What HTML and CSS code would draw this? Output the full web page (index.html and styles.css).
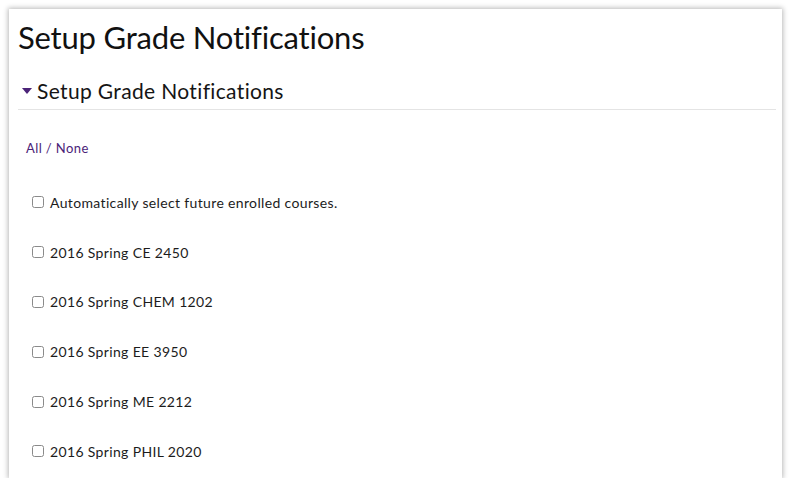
FILE: index.html
```html
<!DOCTYPE html>
<html>
<head>
<meta charset="utf-8">
<link rel="stylesheet" href="styles.css">
</head>
<body>
<div class="card">
  <h1 class="title">Setup Grade Notifications</h1>
  <div class="section-head">
    <span class="caret"></span>
    <h2 class="section-title">Setup Grade Notifications</h2>
  </div>
  <div class="section-body">
    <a class="allnone" href="#">All / None</a>
    <ul class="options">
      <li class="option"><span class="box"></span><span class="label">Automatically select future enrolled courses.</span></li>
      <li class="option"><span class="box"></span><span class="label">2016 Spring CE 2450</span></li>
      <li class="option"><span class="box"></span><span class="label">2016 Spring CHEM 1202</span></li>
      <li class="option"><span class="box"></span><span class="label">2016 Spring EE 3950</span></li>
      <li class="option"><span class="box"></span><span class="label">2016 Spring ME 2212</span></li>
      <li class="option"><span class="box"></span><span class="label">2016 Spring PHIL 2020</span></li>
    </ul>
  </div>
</div>
</body>
</html>
```

FILE: styles.css
```css
html, body {
  margin: 0;
  padding: 0;
  background: #ffffff;
}
body {
  font-family: "Lato", "Open Sans", sans-serif;
  color: #1a1a1a;
}
.card {
  box-sizing: border-box;
  margin: 9px 0 0 9px;
  width: 773px;
  height: 469px;
  background: #fff;
  box-shadow: 0 0 5px 1px rgba(0,0,0,0.28);
  padding: 0 6px 0 9px;
  overflow: hidden;
}
.title {
  margin: 0;
  padding-top: 10px;
  font-size: 31px;
  font-weight: 400;
  line-height: 36px;
  color: #111;
  letter-spacing: -0.2px;
}
.section-head {
  display: flex;
  align-items: center;
  height: 51px;
  border-bottom: 1.5px solid #e4e4e4;
  padding: 13px 0 0 4px;
  box-sizing: border-box;
  margin-top: 4px;
}
.caret {
  width: 0;
  height: 0;
  border-left: 5.5px solid transparent;
  border-right: 5.5px solid transparent;
  border-top: 6px solid #4b2378;
  margin-right: 5px;
  margin-top: 1px;
}
.section-title {
  margin: 0;
  font-size: 21px;
  font-weight: 400;
  color: #151515;
  letter-spacing: 0.35px;
}
.section-body {
  padding-left: 8px;
}
.allnone {
  display: block;
  margin-top: 30px;
  font-size: 13px;
  color: #4b2378;
  text-decoration: none;
  line-height: 16px;
  letter-spacing: 0.4px;
}
.options {
  list-style: none;
  margin: 21.5px 0 0 0;
  padding: 0 0 0 6px;
}
.option {
  display: flex;
  align-items: center;
  height: 49.8px;
}
.box {
  box-sizing: border-box;
  width: 12px;
  height: 12px;
  border: 1px solid #8a8a8a;
  border-radius: 2.5px;
  background: #fff;
  margin-right: 6px;
}
.label {
  font-size: 14px;
  color: #1c1c1c;
  letter-spacing: 0.35px;
}
```
